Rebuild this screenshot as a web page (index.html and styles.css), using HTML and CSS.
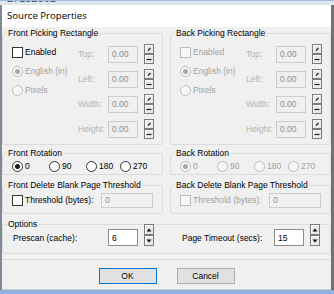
FILE: index.html
```html
<!DOCTYPE html>
<html>
<head>
<meta charset="utf-8">
<link rel="stylesheet" href="styles.css">
</head>
<body>
<div class="screen">
  <div class="topstrip"><span>27152661</span></div>
  <div class="window">
    <div class="titlebar">Source Properties</div>
    <div class="client">
      <div class="cols">
        <fieldset class="group g-pick">
          <legend>Front Picking Rectangle</legend>
          <div class="pick-body">
            <div class="opts">
              <div class="opt"><span class="check"></span>Enabled</div>
              <div class="opt dis"><span class="radio on"></span>English (in)</div>
              <div class="opt dis"><span class="radio"></span>Pixels</div>
            </div>
            <div class="fields">
              <div class="field"><span class="flabel">Top:</span><span class="input dis">0.00</span><span class="spin tick"><span class="sb"><svg viewBox="0 0 8 8"><path d="M3 5.5 L5.5 3"/></svg></span><span class="sb"><svg viewBox="0 0 8 8"><path d="M1.5 4.5 H6.5"/></svg></span></span></div>
              <div class="field"><span class="flabel">Left:</span><span class="input dis">0.00</span><span class="spin tick"><span class="sb"><svg viewBox="0 0 8 8"><path d="M3 5.5 L5.5 3"/></svg></span><span class="sb"><svg viewBox="0 0 8 8"><path d="M1.5 4.5 H6.5"/></svg></span></span></div>
              <div class="field"><span class="flabel">Width:</span><span class="input dis">0.00</span><span class="spin tick"><span class="sb"><svg viewBox="0 0 8 8"><path d="M3 5.5 L5.5 3"/></svg></span><span class="sb"><svg viewBox="0 0 8 8"><path d="M1.5 4.5 H6.5"/></svg></span></span></div>
              <div class="field"><span class="flabel">Height:</span><span class="input dis">0.00</span><span class="spin tick"><span class="sb"><svg viewBox="0 0 8 8"><path d="M3 5.5 L5.5 3"/></svg></span><span class="sb"><svg viewBox="0 0 8 8"><path d="M1.5 4.5 H6.5"/></svg></span></span></div>
            </div>
          </div>
        </fieldset>
        <fieldset class="group g-pick">
          <legend>Back Picking Rectangle</legend>
          <div class="pick-body">
            <div class="opts">
              <div class="opt dis"><span class="check"></span>Enabled</div>
              <div class="opt dis"><span class="radio on"></span>English (in)</div>
              <div class="opt dis"><span class="radio"></span>Pixels</div>
            </div>
            <div class="fields">
              <div class="field"><span class="flabel">Top:</span><span class="input dis">0.00</span><span class="spin tick"><span class="sb"><svg viewBox="0 0 8 8"><path d="M3 5.5 L5.5 3"/></svg></span><span class="sb"><svg viewBox="0 0 8 8"><path d="M1.5 4.5 H6.5"/></svg></span></span></div>
              <div class="field"><span class="flabel">Left:</span><span class="input dis">0.00</span><span class="spin tick"><span class="sb"><svg viewBox="0 0 8 8"><path d="M3 5.5 L5.5 3"/></svg></span><span class="sb"><svg viewBox="0 0 8 8"><path d="M1.5 4.5 H6.5"/></svg></span></span></div>
              <div class="field"><span class="flabel">Width:</span><span class="input dis">0.00</span><span class="spin tick"><span class="sb"><svg viewBox="0 0 8 8"><path d="M3 5.5 L5.5 3"/></svg></span><span class="sb"><svg viewBox="0 0 8 8"><path d="M1.5 4.5 H6.5"/></svg></span></span></div>
              <div class="field"><span class="flabel">Height:</span><span class="input dis">0.00</span><span class="spin tick"><span class="sb"><svg viewBox="0 0 8 8"><path d="M3 5.5 L5.5 3"/></svg></span><span class="sb"><svg viewBox="0 0 8 8"><path d="M1.5 4.5 H6.5"/></svg></span></span></div>
            </div>
          </div>
        </fieldset>

        <fieldset class="group g-rot">
          <legend>Front Rotation</legend>
          <div class="rot-body">
            <div class="opt"><span class="radio on"></span>0</div>
            <div class="opt"><span class="radio"></span>90</div>
            <div class="opt"><span class="radio"></span>180</div>
            <div class="opt"><span class="radio"></span>270</div>
          </div>
        </fieldset>
        <fieldset class="group g-rot">
          <legend>Back Rotation</legend>
          <div class="rot-body">
            <div class="opt dis"><span class="radio on"></span>0</div>
            <div class="opt dis"><span class="radio"></span>90</div>
            <div class="opt dis"><span class="radio"></span>180</div>
            <div class="opt dis"><span class="radio"></span>270</div>
          </div>
        </fieldset>

        <fieldset class="group g-del">
          <legend>Front Delete Blank Page Threshold</legend>
          <div class="del-body">
            <div class="opt del-opt"><span class="check"></span>Threshold (bytes):</div>
            <span class="input dis wide">0</span>
          </div>
        </fieldset>
        <fieldset class="group g-del">
          <legend>Back Delete Blank Page Threshold</legend>
          <div class="del-body">
            <div class="opt dis del-opt"><span class="check"></span>Threshold (bytes):</div>
            <span class="input dis wide">0</span>
          </div>
        </fieldset>
      </div>

      <fieldset class="group g-opt">
        <legend>Options</legend>
        <div class="opt-body">
          <div class="ofield">
            <span class="olabel l1">Prescan (cache):</span>
            <span class="input">6</span>
            <span class="spin arrows"><span class="sb"><svg viewBox="0 0 8 8"><path d="M1.5 5.5 L4 2.5 L6.5 5.5 Z"/></svg></span><span class="sb"><svg viewBox="0 0 8 8"><path d="M1.5 2.5 L4 5.5 L6.5 2.5 Z"/></svg></span></span>
          </div>
          <div class="ofield">
            <span class="olabel l2">Page Timeout (secs):</span>
            <span class="input">15</span>
            <span class="spin arrows"><span class="sb"><svg viewBox="0 0 8 8"><path d="M1.5 5.5 L4 2.5 L6.5 5.5 Z"/></svg></span><span class="sb"><svg viewBox="0 0 8 8"><path d="M1.5 2.5 L4 5.5 L6.5 2.5 Z"/></svg></span></span>
          </div>
        </div>
      </fieldset>

      <div class="buttons">
        <button class="btn default">OK</button>
        <button class="btn">Cancel</button>
      </div>
    </div>
  </div>
  <div class="bottomstrip"></div>
</div>
</body>
</html>
```
FILE: styles.css
```css
html, body {
  margin: 0;
  padding: 0;
}
body {
  width: 334px;
  height: 294px;
  overflow: hidden;
  background: #f0f0f0;
  font-family: "Liberation Sans", Arial, sans-serif;
  font-size: 8.5px;
  color: #000;
}
.screen {
  width: 334px;
  height: 294px;
  display: flex;
  flex-direction: column;
}
.topstrip {
  height: 5px;
  background: #dfe5ec;
  overflow: hidden;
  padding-left: 7px;
  border-top: 1px solid #9dbbe0;
  box-sizing: border-box;
}
.topstrip span {
  display: block;
  font-size: 11px;
  line-height: 11px;
  margin-top: -8px;
  color: #3a4656;
}
.window {
  flex: 1;
  display: flex;
  flex-direction: column;
  border-left: 2px solid #7f8a99;
  border-right: 3px solid #6f7379;
  background: #f0f0f0;
  min-height: 0;
}
.titlebar {
  height: 22px;
  flex: none;
  background: #fff;
  padding-left: 5px;
  font-family: "Open Sans", "Noto Sans", sans-serif;
  font-size: 9.6px;
  line-height: 22px;
  color: #000;
}
.client {
  flex: 1;
  padding-top: 1px;
  display: flex;
  flex-direction: column;
  min-height: 0;
  border-bottom: 1px solid #c8ccd2;
}
.cols {
  display: grid;
  grid-template-columns: 161px 161px;
  column-gap: 7px;
}
.group {
  margin: 0;
  padding: 0;
  min-inline-size: 0;
  border: 1px solid #dcdcdc;
  border-radius: 2px;
  box-sizing: border-box;
}
.group legend {
  margin-left: 4px;
  padding: 0 1px;
  line-height: 10px;
  font-size: 8.5px;
  color: #000;
}
.g-pick { height: 117px; }
.g-rot { height: 27px; margin-top: 3px; }
.g-del { height: 34px; margin-top: 5px; }
.g-opt { height: 35px; margin-top: 5px; }

.opt {
  display: flex;
  align-items: center;
  height: 12px;
  white-space: nowrap;
  color: #000;
}
.opt.dis { color: #a2a2a2; }

.check, .radio {
  flex: none;
  width: 11px;
  height: 11px;
  box-sizing: border-box;
  border: 1px solid #333;
  background: #fff;
  margin-right: 2px;
}
.radio {
  border-radius: 50%;
  display: flex;
  align-items: center;
  justify-content: center;
}
.radio.on::after {
  content: "";
  width: 5px;
  height: 5px;
  border-radius: 50%;
  background: #1a1a1a;
}
.dis .check, .dis .radio {
  border-color: #bcbcbc;
  background: #f7f7f7;
}
.dis .radio.on::after { background: #a8a8a8; }

.pick-body {
  display: flex;
  padding: 6px 0 0 9px;
}
.opts {
  width: 66px;
  margin-top: 2px;
  display: flex;
  flex-direction: column;
  gap: 7px;
}
.fields {
  display: flex;
  flex-direction: column;
  gap: 5px;
}
.field {
  display: flex;
  align-items: center;
  height: 20px;
}
.flabel {
  width: 30px;
  color: #b4b4b4;
}
.input {
  display: flex;
  align-items: center;
  width: 30px;
  height: 17px;
  box-sizing: border-box;
  border: 1px solid #8c8c8c;
  background: #fff;
  padding-left: 3px;
  color: #000;
}
.input.dis {
  border-color: #cccccc;
  background: #f0f0f0;
  color: #8e8e8e;
}
.input.wide {
  width: 52px;
  height: 15px;
}
.spin {
  display: flex;
  flex-direction: column;
  margin-left: 6px;
  width: 10px;
}
.spin .sb {
  flex: 1;
  box-sizing: border-box;
  border: 1px solid #7b7b7b;
  background: #e9e9e9;
  box-shadow: inset 1px 1px 0 #fff;
  display: flex;
  align-items: center;
  justify-content: center;
}
.spin svg {
  width: 8px;
  height: 8px;
}
.tick { height: 20px; }
.tick svg path {
  stroke: #222;
  stroke-width: 1.2;
  fill: none;
}
.arrows {
  height: 22px;
  margin-top: -5px;
}
.arrows svg path { fill: #111; }

.rot-body {
  display: grid;
  grid-template-columns: 37px 37px 34px auto;
  align-items: center;
  height: 16px;
  padding-left: 9px;
}
.rot-body .opt { height: 16px; }

.del-body {
  display: flex;
  align-items: center;
  height: 16px;
  padding: 2px 0 0 9px;
}
.del-opt { width: 89px; }

.opt-body {
  display: flex;
  align-items: center;
  height: 17px;
  padding-left: 10px;
}
.ofield {
  display: flex;
  align-items: center;
}
.olabel.l1 { width: 95px; }
.olabel.l2 { width: 92px; margin-left: 28px; }

.buttons {
  margin-top: 5px;
  border-top: 1px solid #dadada;
  padding-top: 8px;
  display: flex;
  justify-content: center;
  gap: 20px;
}
.btn {
  width: 58px;
  height: 16px;
  box-sizing: border-box;
  border: 1px solid #adadad;
  background: #e1e1e1;
  font-family: "Liberation Sans", Arial, sans-serif;
  font-size: 8.5px;
  color: #000;
  padding: 0;
  margin: 0;
}
.btn.default {
  border-color: #0078d7;
  box-shadow: inset 0 0 0 1px #e1e1e1;
}
.bottomstrip {
  height: 4px;
  flex: none;
  background: #8fb2dc;
}
```
